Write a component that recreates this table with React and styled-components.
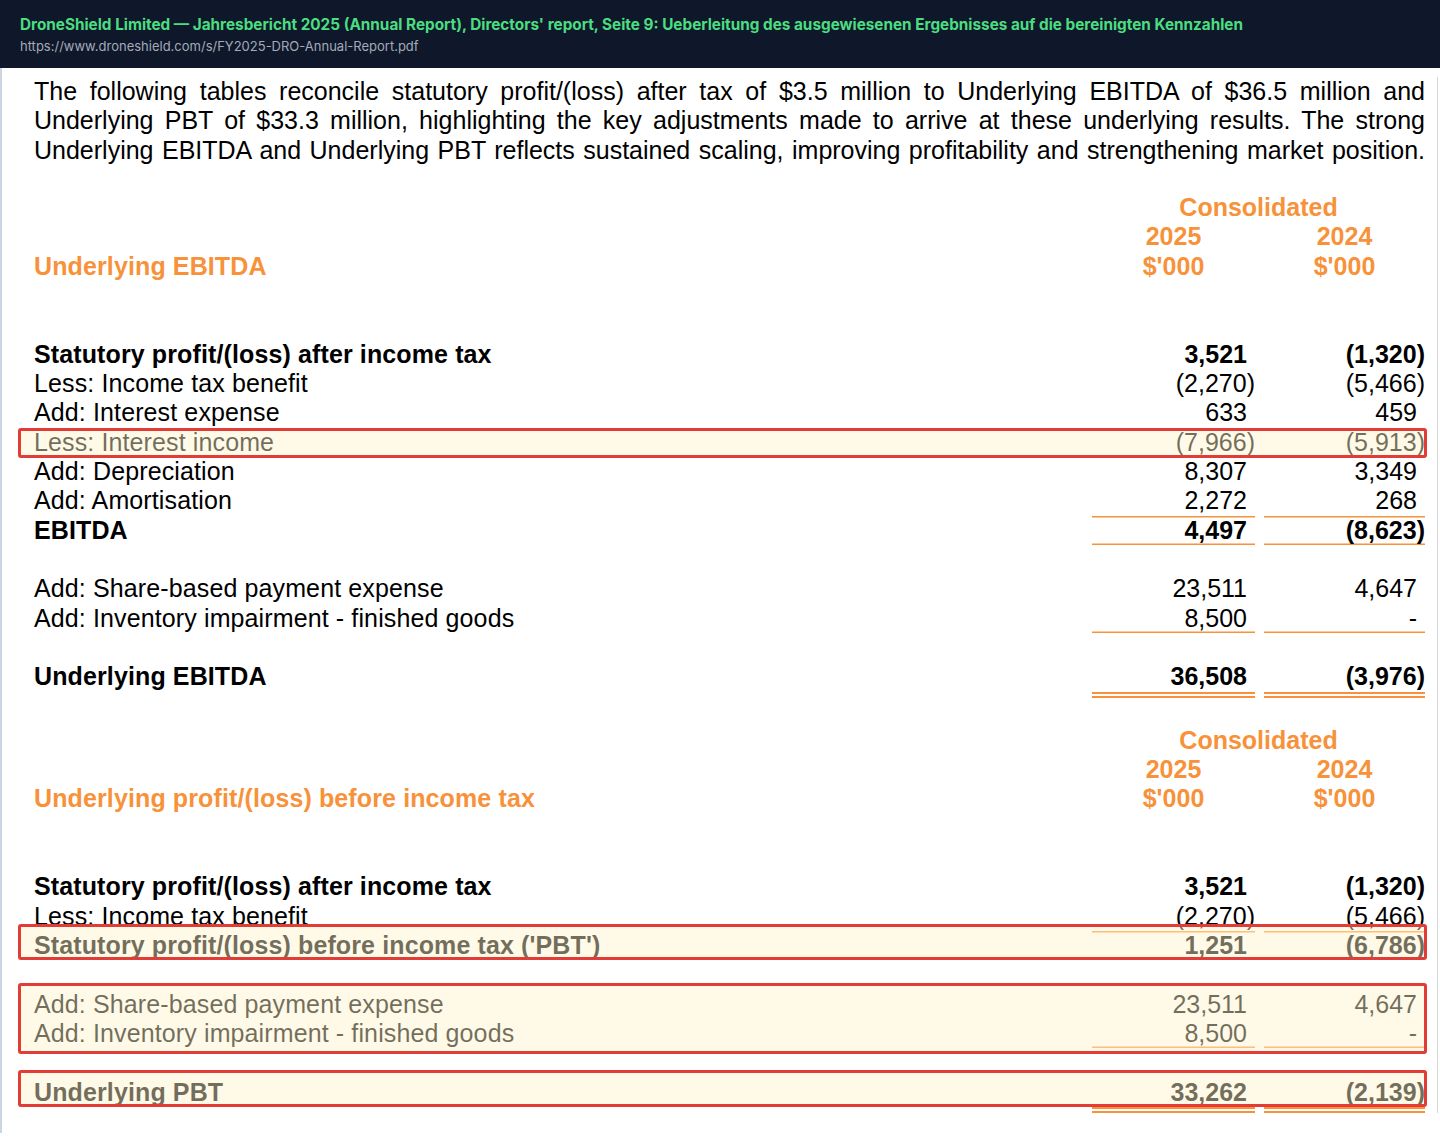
import React from 'react'
import styled, { createGlobalStyle, css } from 'styled-components'

const ORANGE = '#f7923a'
const ROW = '29.33px'

const GlobalStyle = createGlobalStyle`
  body {
    margin: 0;
    background: #ffffff;
    font-family: "Liberation Sans", Arial, sans-serif;
    color: #000;
  }
`

const TopBar = styled.header`
  height: 68px;
  box-sizing: border-box;
  background: #0f172a;
  padding: 1px 20px 0;
  display: flex;
  flex-direction: column;
  justify-content: center;
  gap: 4px;
  font-family: Inter, "Noto Sans", sans-serif;
`

const Title = styled.div`
  color: #4ade80;
  font-size: 15.3px;
  font-weight: 700;
  line-height: 19px;
  white-space: nowrap;
`

const Url = styled.div`
  color: #a3abb9;
  font-size: 13px;
  line-height: 16px;
`

const Page = styled.main`
  border-left: 2px solid #cdd5e3;
  padding: 9px 2px 20px 0;
`

const Paper = styled.div`
  border-right: 1px solid #d6d6d6;
  padding: 0 12px 0 32px;
`

const Intro = styled.p`
  margin: 0;
  font-size: 25px;
  line-height: ${ROW};
  text-align: justify;
  text-align-last: justify;
`

const Table = styled.section`
  display: flex;
  flex-direction: column;
  margin-top: ${p => p.$gap}px;
`

const Row = styled.div`
  display: grid;
  grid-template-columns: 1fr 163px 161px;
  column-gap: 9px;
  align-items: start;
  min-height: ${ROW};
`

const Label = styled.div`
  font-size: 25px;
  line-height: ${ROW};
  height: ${ROW};
  white-space: nowrap;
  letter-spacing: 0.12px;
  font-weight: ${p => (p.$bold || p.$accent ? 700 : 400)};
  color: ${p => (p.$accent ? ORANGE : '#000')};
`

const Head = styled.div`
  grid-column: ${p => p.$span || 'auto'};
  font-size: 25px;
  line-height: ${ROW};
  height: ${ROW};
  font-weight: 700;
  color: ${ORANGE};
  text-align: center;
`

const ruleStyles = {
  top: css`box-shadow: inset 0 1.5px 0 ${ORANGE};`,
  bottom: css`box-shadow: inset 0 -1.5px 0 ${ORANGE};`,
  both: css`box-shadow: inset 0 1.5px 0 ${ORANGE}, inset 0 -1.5px 0 ${ORANGE};`,
  double: css`border-bottom: 6px double ${ORANGE};`,
}

const Num = styled.div`
  font-size: 25px;
  line-height: ${ROW};
  height: ${ROW};
  text-align: right;
  padding-right: 8px;
  white-space: nowrap;
  font-weight: ${p => (p.$bold ? 700 : 400)};
  ${p => p.$rule && ruleStyles[p.$rule]}
`

const Paren = styled.span`
  margin-right: -8px;
`

const Highlight = styled.div`
  position: relative;
  &::after {
    content: '';
    position: absolute;
    left: -16px;
    right: -2px;
    top: ${p => -p.$top}px;
    bottom: ${p => -p.$bottom}px;
    border: 3px solid #e33b35;
    border-radius: 3px;
    background: rgba(255, 244, 205, 0.45);
    pointer-events: none;
    z-index: 1;
  }
`

function Amount({ value, bold, rule }) {
  const neg = value.endsWith(')')
  return (
    <Num $bold={bold} $rule={rule}>
      {neg ? value.slice(0, -1) : value}
      {neg && <Paren>)</Paren>}
    </Num>
  )
}

function Line({ label, a, b, bold, rule }) {
  return (
    <Row>
      <Label $bold={bold}>{label}</Label>
      <Amount value={a} bold={bold} rule={rule} />
      <Amount value={b} bold={bold} rule={rule} />
    </Row>
  )
}

const Blank = () => <Row />

function Heading({ title }) {
  return (
    <>
      <Row>
        <span />
        <Head $span="2 / 4">Consolidated</Head>
      </Row>
      <Row>
        <span />
        <Head>2025</Head>
        <Head>2024</Head>
      </Row>
      <Row>
        <Label $accent>{title}</Label>
        <Head>$'000</Head>
        <Head>$'000</Head>
      </Row>
      <Blank />
      <Blank />
    </>
  )
}

export default function App() {
  return (
    <>
      <GlobalStyle />
      <TopBar>
        <Title>
          DroneShield Limited — Jahresbericht 2025 (Annual Report), Directors' report, Seite 9: Ueberleitung des ausgewiesenen Ergebnisses auf die bereinigten Kennzahlen
        </Title>
        <Url>https://www.droneshield.com/s/FY2025-DRO-Annual-Report.pdf</Url>
      </TopBar>
      <Page>
        <Paper>
          <Intro>
            The following tables reconcile statutory profit/(loss) after tax of $3.5 million to Underlying EBITDA of $36.5 million and
            <br />
            Underlying PBT of $33.3 million, highlighting the key adjustments made to arrive at these underlying results. The strong
            <br />
            Underlying EBITDA and Underlying PBT reflects sustained scaling, improving profitability and strengthening market position.
          </Intro>

          <Table $gap={28}>
            <Heading title="Underlying EBITDA" />
            <Line label="Statutory profit/(loss) after income tax" a="3,521" b="(1,320)" bold />
            <Line label="Less: Income tax benefit" a="(2,270)" b="(5,466)" />
            <Line label="Add: Interest expense" a="633" b="459" />
            <Highlight $top={0} $bottom={1}>
              <Line label="Less: Interest income" a="(7,966)" b="(5,913)" />
            </Highlight>
            <Line label="Add: Depreciation" a="8,307" b="3,349" />
            <Line label="Add: Amortisation" a="2,272" b="268" />
            <Line label="EBITDA" a="4,497" b="(8,623)" bold rule="both" />
            <Blank />
            <Line label="Add: Share-based payment expense" a="23,511" b="4,647" />
            <Line label="Add: Inventory impairment - finished goods" a="8,500" b="-" rule="bottom" />
            <Blank />
            <Line label="Underlying EBITDA" a="36,508" b="(3,976)" bold rule="double" />
          </Table>

          <Table $gap={28}>
            <Heading title="Underlying profit/(loss) before income tax" />
            <Line label="Statutory profit/(loss) after income tax" a="3,521" b="(1,320)" bold />
            <Line label="Less: Income tax benefit" a="(2,270)" b="(5,466)" />
            <Highlight $top={7} $bottom={0}>
              <Line label="Statutory profit/(loss) before income tax ('PBT')" a="1,251" b="(6,786)" bold rule="top" />
            </Highlight>
            <Blank />
            <Highlight $top={7} $bottom={6}>
              <Line label="Add: Share-based payment expense" a="23,511" b="4,647" />
              <Line label="Add: Inventory impairment - finished goods" a="8,500" b="-" rule="bottom" />
            </Highlight>
            <Blank />
            <Highlight $top={7.5} $bottom={-5.5}>
              <Line label="Underlying PBT" a="33,262" b="(2,139)" bold rule="double" />
            </Highlight>
          </Table>
        </Paper>
      </Page>
    </>
  )
}
